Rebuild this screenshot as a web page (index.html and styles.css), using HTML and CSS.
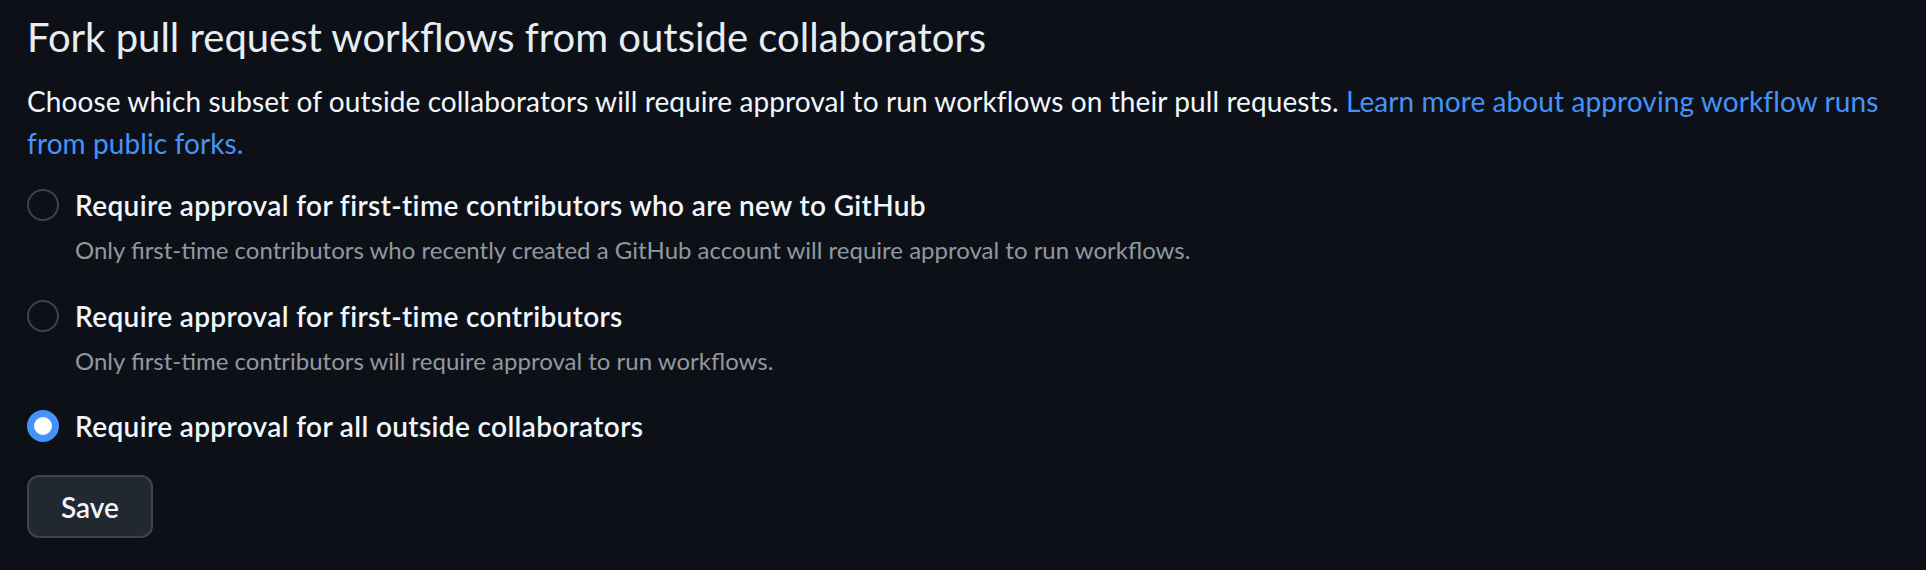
FILE: index.html
```html
<!DOCTYPE html>
<html lang="en">
<head>
    <meta charset="UTF-8">
    <title>Fork pull request workflows</title>
    <link rel="stylesheet" href="styles.css">
</head>
<body>
    <form class="settings">
        <h2 class="subhead">Fork pull request workflows from outside collaborators</h2>
        <p class="note">Choose which subset of outside collaborators will require approval to run workflows on their pull requests. <a href="#">Learn more about approving workflow runs from public forks.</a></p>

        <div class="options">
            <label class="option">
                <input type="radio" name="approval" value="new">
                <span class="option-text">
                    <span class="option-title">Require approval for first-time contributors who are new to GitHub</span>
                    <span class="option-note">Only first-time contributors who recently created a GitHub account will require approval to run workflows.</span>
                </span>
            </label>
            <label class="option">
                <input type="radio" name="approval" value="first">
                <span class="option-text">
                    <span class="option-title">Require approval for first-time contributors</span>
                    <span class="option-note">Only first-time contributors will require approval to run workflows.</span>
                </span>
            </label>
            <label class="option">
                <input type="radio" name="approval" value="all" checked>
                <span class="option-text">
                    <span class="option-title">Require approval for all outside collaborators</span>
                </span>
            </label>
        </div>

        <button type="button" class="btn">Save</button>
    </form>
</body>
</html>
```

FILE: styles.css
```css
body {
    margin: 0;
    background-color: #0d1117;
    color: #f0f6fc;
    font-family: 'Lato', 'Noto Sans', sans-serif;
}

.settings {
    padding: 7px 27px 0;
}

.subhead {
    margin: 0;
    font-size: 40px;
    font-weight: 400;
    line-height: 60px;
    color: #e6edf3;
}

.note {
    margin: 13px 0 0;
    font-size: 28px;
    line-height: 42px;
    letter-spacing: 0.1px;
}

.note a {
    color: #4493f8;
    text-decoration: none;
}

.options {
    display: flex;
    flex-direction: column;
    gap: 26.5px;
    margin-top: 20px;
}

.option {
    display: flex;
    gap: 16px;
    align-items: flex-start;
}

.option input {
    appearance: none;
    flex: none;
    width: 32px;
    height: 32px;
    margin: 5px 0 0;
    border: 2px solid #3d444d;
    border-radius: 50%;
    background: transparent;
}

.option input:checked {
    border: 7px solid #4493f8;
    background: #fff;
}

.option-text {
    display: flex;
    flex-direction: column;
    gap: 6px;
}

.option-title {
    font-size: 28px;
    font-weight: 600;
    line-height: 42px;
    letter-spacing: 0.36px;
}

.option-note {
    font-size: 24px;
    line-height: 36px;
    color: #9198a1;
}

.btn {
    display: flex;
    align-items: center;
    height: 63px;
    margin-top: 28px;
    padding: 0 32px;
    border: 2px solid #3d444d;
    border-radius: 12px;
    background: #212830;
    color: #f0f6fc;
    font-family: inherit;
    font-size: 28px;
    font-weight: 600;
}
```
